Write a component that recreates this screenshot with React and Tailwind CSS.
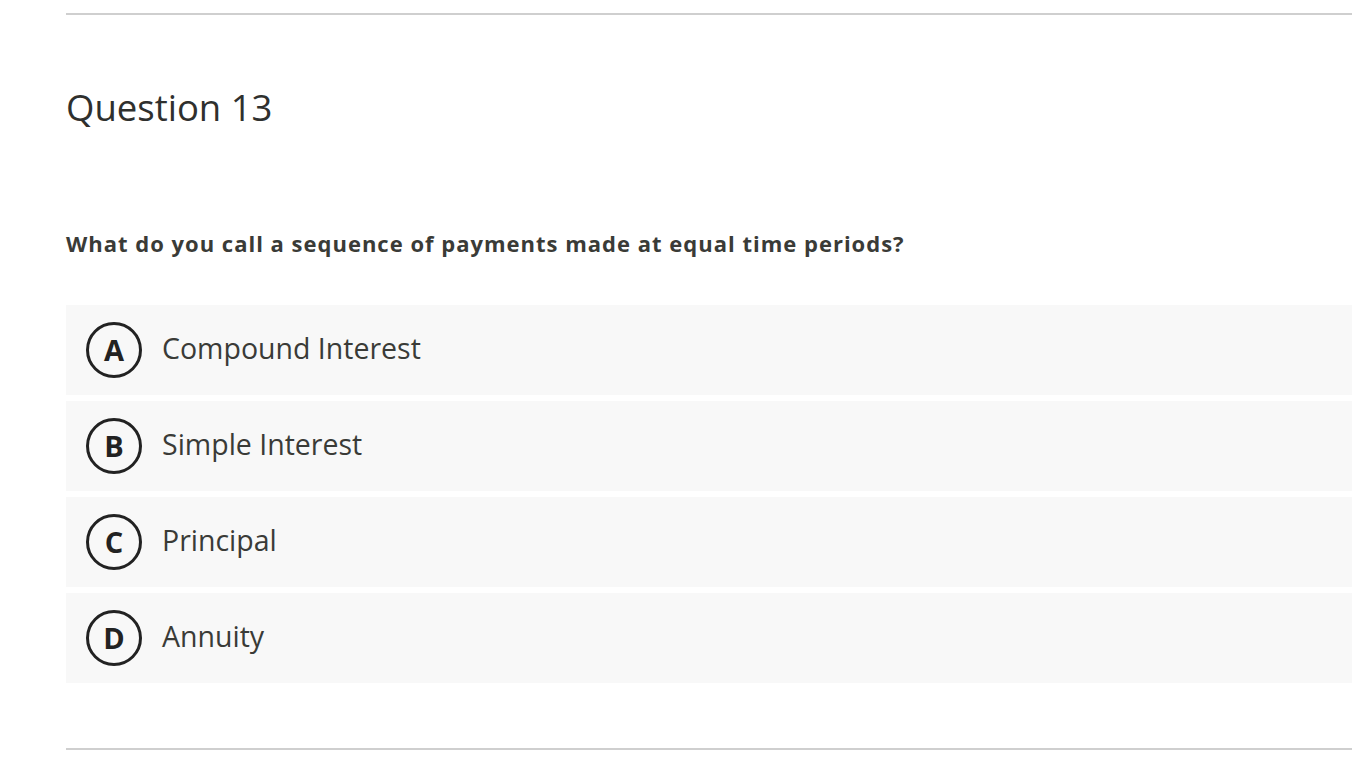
export default function App() {
  const opts = [
    ["A", "Compound Interest"],
    ["B", "Simple Interest"],
    ["C", "Principal"],
    ["D", "Annuity"],
  ];
  return (
    <div className="w-[1352px] h-[784px] bg-white overflow-hidden" style={{ fontFamily: '"Open Sans", sans-serif' }}>
      <div className="pl-[66px] pt-[13px]">
        <div className="h-[2px] bg-[#cfcfcf]" />
        <h1 className="mt-[70px] text-[36.5px] leading-[44px] text-[#2f302e] font-medium">Question 13</h1>
        <p className="mt-[99px] text-[22px] leading-[30px] font-bold tracking-[1px] text-[#3a3b37]">
          What do you call a sequence of payments made at equal time periods?
        </p>
        <div className="mt-[47px] flex flex-col gap-[6px]">
          {opts.map(([l, t]) => (
            <div key={l} className="h-[90px] bg-[#f8f8f8] flex items-center pl-[20px]">
              <div className="w-[56px] h-[56px] rounded-full border-[3px] border-[#222] flex items-center justify-center text-[29px] font-bold text-[#222]">
                {l}
              </div>
              <span className="ml-[20px] mb-[3px] text-[28.5px] font-medium text-[#3a3b37]">{t}</span>
            </div>
          ))}
        </div>
        <div className="mt-[65px] h-[2px] bg-[#cfcfcf]" />
      </div>
    </div>
  );
}
